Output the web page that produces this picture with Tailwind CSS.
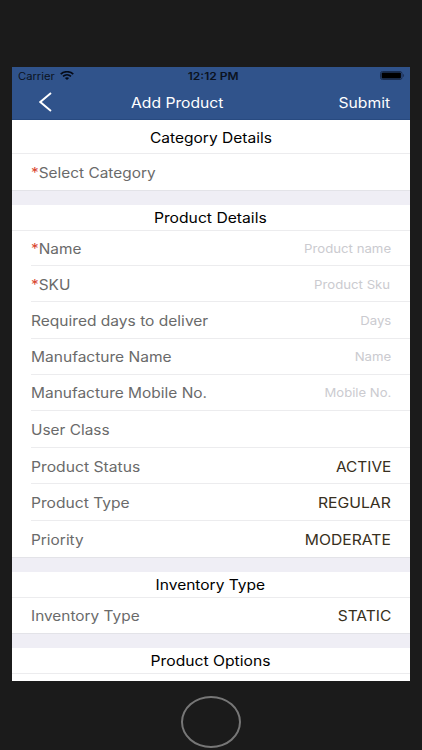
<!DOCTYPE html>
<html lang="en">
<head>
<meta charset="utf-8">
<title>Add Product</title>
<script src="https://cdn.jsdelivr.net/npm/@tailwindcss/browser@4"></script>
</head>
<body class="w-[422px] h-[750px] overflow-hidden bg-[#1b1b1b] font-['Inter','Liberation_Sans',sans-serif] text-[14px] leading-none">
<div class="flex flex-col items-center h-[750px] pt-[67px]">
  <main class="flex flex-col w-[398px] h-[614px] bg-white overflow-hidden">
    <header class="h-[53px] shrink-0 bg-[#30538b] border-b border-[#284a80]">
      <div class="grid grid-cols-3 items-center h-[17px] pl-[6px] pr-[5px] text-[10px] text-[#0b1220]">
        <div class="flex items-center gap-[5px]">
          <span class="inline-block w-[37px] whitespace-nowrap"><span class="inline-block origin-left scale-x-[1.12]">Carrier</span></span>
          <svg class="w-[14px] h-[9px]" viewBox="0 0 14 9" fill="none" stroke="#050b18" stroke-width="1.6"><path d="M.7 3.1C4.2-.1 9.8-.1 13.3 3.1M3 5.3c2.3-2 5.7-2 8 0"/><path d="M4.9 6.9c1.2-1 3-1 4.2 0L7 8.9z" fill="#050b18" stroke="none"/></svg>
        </div>
        <div class="text-center font-semibold pl-[3px]"><span class="inline-block scale-x-[1.2]">12:12 PM</span></div>
        <div class="flex justify-end">
          <svg class="w-[25px] h-[9px]" viewBox="0 0 25 9"><rect x=".5" y=".5" width="21.5" height="8" rx="2" fill="none" stroke="#1a2d50"/><rect x="1.6" y="1.4" width="19.3" height="6.2" rx="1" fill="#000"/><path d="M23.2 3v3c1.2-.4 1.2-2.6 0-3z" fill="#1a2d50"/></svg>
        </div>
      </div>
      <div class="flex items-center h-[36px] pl-[27px] pr-[20px] text-white">
        <svg class="w-[13px] h-[20px]" viewBox="0 0 13 20" fill="none" stroke="#fff" stroke-width="1.9"><path d="M12 1 1.3 10 12 19"/></svg>
        <h1 class="ml-[79px] pt-[2px]"><span class="inline-block origin-left scale-x-[1.12]">Add Product</span></h1>
        <div class="ml-auto pt-[2px]"><span class="inline-block origin-right scale-x-[1.12]">Submit</span></div>
      </div>
    </header>

    <h2 class="h-[34px] pt-[2px] shrink-0 flex items-center justify-center border-b border-[#ececee] text-black"><span class="scale-x-[1.11]">Category Details</span></h2>
    <div class="h-[36px] pt-[2px] shrink-0 flex items-center pl-[19px] text-[#6a6a6a]"><span class="origin-left scale-x-[1.1]"><span class="text-[#d9452e]">*</span>Select Category</span></div>
    <div class="h-[15px] shrink-0 bg-[#efeef5] border-t border-[#e3e3e8]"></div>

    <h2 class="h-[26px] shrink-0 flex items-center justify-center pr-px border-b border-[#ececee] text-black"><span class="scale-x-[1.12]">Product Details</span></h2>
    <div class="pl-[19px] text-[#6a6a6a]">
      <div class="h-[35px] pt-px flex items-center justify-between pr-[19px] border-b border-[#ececee]"><span class="origin-left scale-x-[1.1]"><span class="text-[#d9452e]">*</span>Name</span><span class="origin-right scale-x-[1.1] text-[12px] text-[#cbcbd0]">Product name</span></div>
      <div class="h-[36px] pt-[2px] flex items-center justify-between pr-[20px] border-b border-[#ececee]"><span class="origin-left scale-x-[1.1]"><span class="text-[#d9452e]">*</span>SKU</span><span class="origin-right scale-x-[1.1] text-[12px] text-[#cbcbd0]">Product Sku</span></div>
      <div class="h-[37px] pt-px flex items-center justify-between pr-[19px] border-b border-[#ececee]"><span class="origin-left scale-x-[1.11]">Required days to deliver</span><span class="origin-right scale-x-[1.1] text-[12px] text-[#cbcbd0]">Days</span></div>
      <div class="h-[36px] flex items-center justify-between pr-[19px] border-b border-[#ececee]"><span class="origin-left scale-x-[1.11]">Manufacture Name</span><span class="origin-right scale-x-[1.1] text-[12px] text-[#cbcbd0]">Name</span></div>
      <div class="h-[36px] pt-px flex items-center justify-between pr-[19px] border-b border-[#ececee]"><span class="origin-left scale-x-[1.105]">Manufacture Mobile No.</span><span class="origin-right scale-x-[1.09] text-[12px] text-[#cbcbd0]">Mobile No.</span></div>
      <div class="h-[37px] pt-px flex items-center pr-[19px] border-b border-[#ececee]"><span class="origin-left scale-x-[1.1]">User Class</span></div>
      <div class="h-[36px] pt-[2px] flex items-center justify-between pr-[19px] border-b border-[#ececee]"><span class="origin-left scale-x-[1.12]">Product Status</span><span class="origin-right scale-x-[1.1] text-[#382f20]">ACTIVE</span></div>
      <div class="h-[37px] pt-px flex items-center justify-between pr-[19px] border-b border-[#ececee]"><span class="origin-left scale-x-[1.115]">Product Type</span><span class="origin-right scale-x-[1.125] text-[#382f20]">REGULAR</span></div>
      <div class="h-[36px] pt-px flex items-center justify-between pr-[19px]"><span class="origin-left scale-x-[1.1]">Priority</span><span class="origin-right scale-x-[1.12] text-[#382f20]">MODERATE</span></div>
    </div>
    <div class="h-[15px] shrink-0 bg-[#efeef5] border-t border-[#e3e3e8]"></div>

    <h2 class="h-[26px] shrink-0 flex items-center justify-center pr-px border-b border-[#ececee] text-black"><span class="scale-x-[1.11]">Inventory Type</span></h2>
    <div class="h-[35px] shrink-0 flex items-center justify-between pl-[19px] pr-[19px] text-[#6a6a6a]"><span class="origin-left scale-x-[1.1]">Inventory Type</span><span class="origin-right scale-x-[1.11] text-[#382f20]">STATIC</span></div>
    <div class="h-[15px] shrink-0 bg-[#efeef5] border-t border-[#e3e3e8]"></div>

    <h2 class="h-[26px] shrink-0 flex items-center justify-center border-b border-[#ececee] text-black"><span class="scale-x-[1.12]">Product Options</span></h2>
  </main>
  <div class="w-[60px] h-[52px] mt-[15px] mr-px shrink-0 rounded-[50%] border-2 border-[#777]"></div>
</div>
</body>
</html>
